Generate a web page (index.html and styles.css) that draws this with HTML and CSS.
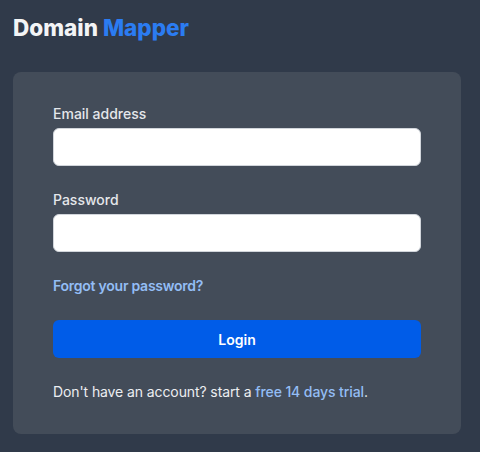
FILE: index.html
```html
<!DOCTYPE html>
<html lang="en">
<head>
<meta charset="utf-8">
<title>Domain Mapper</title>
<link rel="stylesheet" href="styles.css">
</head>
<body>
<div class="page">
  <h1 class="brand">Domain <span class="brand-accent">Mapper</span></h1>
  <form class="card">
    <div class="field">
      <label class="label" for="email">Email address</label>
      <input class="input" id="email" type="email">
    </div>
    <div class="field">
      <label class="label" for="password">Password</label>
      <input class="input" id="password" type="password">
    </div>
    <a class="link forgot" href="#">Forgot your password?</a>
    <button class="btn" type="button">Login</button>
    <p class="signup">Don't have an account? start a <a class="link" href="#">free 14 days trial</a>.</p>
  </form>
</div>
</body>
</html>
```
FILE: styles.css
```css
* { box-sizing: border-box; }
html, body { margin: 0; padding: 0; }
body {
  background: #303a4a;
  font-family: Inter, "Noto Sans", sans-serif;
  color: #e5e7eb;
}
.page {
  padding: 12px 19px 0 13px;
}
.brand {
  margin: 0 0 28px;
  font-size: 22.5px;
  line-height: 32px;
  font-weight: 800;
  letter-spacing: 0;
  color: #f3f4f6;
}
.brand-accent { color: #2b7cf2; }
.card {
  background: #434c59;
  border-radius: 8px;
  padding: 32px 40px 32px;
  display: flex;
  flex-direction: column;
  gap: 24px;
}
.field {
  display: flex;
  flex-direction: column;
  gap: 4px;
}
.label {
  font-size: 14px;
  line-height: 20px;
  font-weight: 500;
  color: #e5e7eb;
}
.input {
  height: 38px;
  border: 1px solid #d1d5db;
  border-radius: 6px;
  background: #fff;
  margin: 0;
}
.link {
  color: #93bdf5;
  text-decoration: none;
  font-weight: 500;
}
.forgot {
  font-size: 14px;
  line-height: 20px;
  font-weight: 600;
  letter-spacing: -0.25px;
  align-self: flex-start;
}
.btn {
  height: 38px;
  border: 0;
  border-radius: 6px;
  background: #005ce8;
  color: #fff;
  font-family: inherit;
  font-size: 14px;
  font-weight: 600;
}
.signup {
  margin: 0;
  font-size: 14px;
  line-height: 20px;
  letter-spacing: -0.1px;
  color: #eceef1;
}
```
